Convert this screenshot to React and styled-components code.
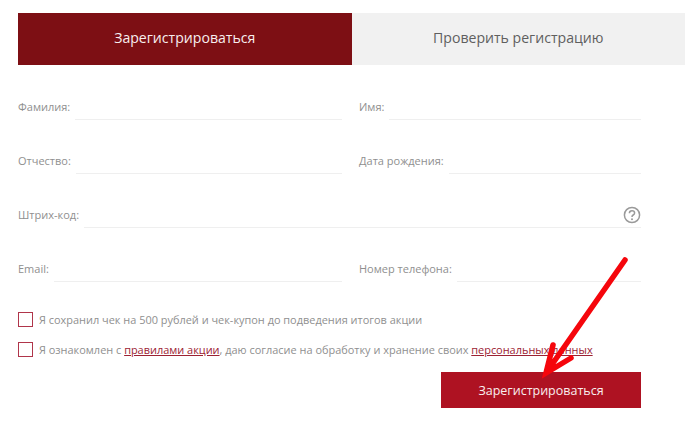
import React from 'react'
import styled, { createGlobalStyle } from 'styled-components';

const GlobalStyle = createGlobalStyle`
    body {
        margin: 0;
        background: #ffffff;
        font-family: "Open Sans", "Liberation Sans", sans-serif;
    }
`;

const Page = styled.div`
    position: relative;
    width: 700px;
    height: 423px;
    padding: 13px 0 0 18px;
    box-sizing: border-box;
    overflow: hidden;
`;

const Tabs = styled.div`
    display: flex;
    width: 667px;
    height: 52px;
`;

const Tab = styled.div`
    flex: 1;
    display: flex;
    align-items: center;
    justify-content: center;
    padding-bottom: 3px;
    box-sizing: border-box;
    font-size: 14.1px;
    background: ${({ active }) => (active ? "#7d0f14" : "#f1f1f1")};
    color: ${({ active }) => (active ? "#f7eeee" : "#5f5f5f")};
`;

const Form = styled.form`
    width: 623px;
    margin-top: 25px;
`;

const Fields = styled.div`
    display: grid;
    grid-template-columns: 324px 282px;
    column-gap: 17px;
    row-gap: 24px;
`;

const Field = styled.div`
    display: flex;
    align-items: flex-end;
    height: 30px;
    grid-column: ${({ wide }) => (wide ? "1 / -1" : "auto")};
`;

const Label = styled.label`
    font-size: 11px;
    line-height: 16px;
    padding: 0 5px 5px 0;
    color: #8f8f8f;
    white-space: nowrap;
`;

const InputWrap = styled.div`
    flex: 1;
    display: flex;
    align-items: center;
    height: 100%;
    box-sizing: border-box;
    border-bottom: 1px solid #efefef;
`;

const Input = styled.input`
    flex: 1;
    min-width: 0;
    border: 0;
    outline: none;
    background: transparent;
`;

const Help = styled.svg`
    width: 18px;
    height: 18px;
    margin-top: 5px;
`;

const Checks = styled.div`
    display: flex;
    flex-direction: column;
    gap: 15px;
    margin-top: 30px;
`;

const CheckRow = styled.div`
    display: flex;
    align-items: center;
    gap: 6px;
    height: 15px;
    font-size: 10.95px;
    color: #8f8f8f;
    white-space: nowrap;
`;

const Box = styled.span`
    width: 15px;
    height: 15px;
    box-sizing: border-box;
    border: 1px solid #b0354a;
`;

const TermsLink = styled.a`
    color: #9c2233;
    text-decoration: underline;
`;

const Actions = styled.div`
    display: flex;
    justify-content: flex-end;
    margin-top: 15px;
`;

const Submit = styled.button`
    width: 200px;
    height: 36px;
    border: 0;
    background: #ae1222;
    color: #f9eeee;
    font-family: inherit;
    font-size: 12.5px;
`;

const Arrow = styled.svg`
    position: absolute;
    top: 0;
    left: 0;
    pointer-events: none;
`;

function TextField({ label, wide, children }) {
    return (
        <Field wide={wide}>
            <Label>{label}</Label>
            <InputWrap>
                <Input type="text" />
                {children}
            </InputWrap>
        </Field>
    );
}

export default function App() {
    return (
        <Page>
            <GlobalStyle />
            <Tabs>
                <Tab active>Зарегистрироваться</Tab>
                <Tab>Проверить регистрацию</Tab>
            </Tabs>
            <Form>
                <Fields>
                    <TextField label="Фамилия:" />
                    <TextField label="Имя:" />
                    <TextField label="Отчество:" />
                    <TextField label="Дата рождения:" />
                    <TextField label="Штрих-код:" wide>
                        <Help viewBox="0 0 18 18">
                            <circle cx="9" cy="9" r="7.6" fill="none" stroke="#9a9a9a" strokeWidth="1.5" />
                            <path d="M6.4 7.2c0-1.5 1.1-2.4 2.6-2.4s2.6 .9 2.6 2.2c0 1-.6 1.5-1.4 2-.8 .5-1.2 .9-1.2 1.9" fill="none" stroke="#9a9a9a" strokeWidth="1.5" />
                            <circle cx="9" cy="13.2" r="1" fill="#9a9a9a" />
                        </Help>
                    </TextField>
                    <TextField label="Email:" />
                    <TextField label="Номер телефона:" />
                </Fields>
                <Checks>
                    <CheckRow>
                        <Box />
                        <span>Я сохранил чек на 500 рублей и чек-купон до подведения итогов акции</span>
                    </CheckRow>
                    <CheckRow>
                        <Box />
                        <span>
                            Я ознакомлен с <TermsLink>правилами акции</TermsLink>, даю согласие на обработку и хранение своих <TermsLink>персональных данных</TermsLink>
                        </span>
                    </CheckRow>
                </Checks>
                <Actions>
                    <Submit type="button">Зарегистрироваться</Submit>
                </Actions>
            </Form>
            <Arrow width="700" height="423" viewBox="0 0 700 423">
                <path d="M625 260 L546 373 M553 345 L546 373 L571 358" fill="none" stroke="#f5060c" strokeWidth="5.5" strokeLinecap="round" strokeLinejoin="miter" />
            </Arrow>
        </Page>
    );
}
